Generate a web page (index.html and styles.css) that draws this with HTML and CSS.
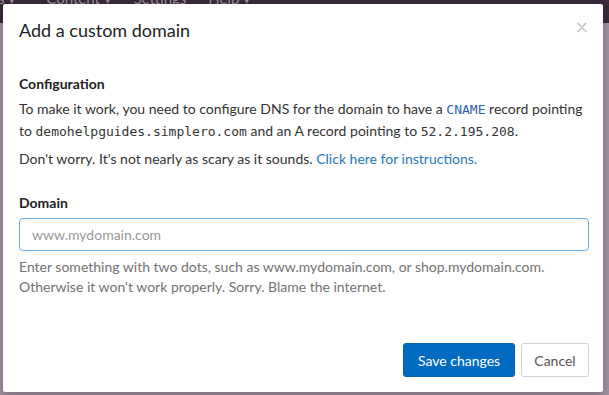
FILE: index.html
```html
<!DOCTYPE html>
<html lang="en">
<head>
    <meta charset="UTF-8">
    <title>Add a custom domain</title>
    <link rel="stylesheet" href="styles.css">
</head>
<body>
    <div class="navbar">
        <span class="nav-item">s &#9662;</span>
        <span class="nav-item">Content &#9662;</span>
        <span class="nav-item">Settings</span>
        <span class="nav-item">Help &#9662;</span>
    </div>
    <div class="backdrop"></div>

    <div class="modal">
        <div class="modal-header">
            <h3 class="modal-title">Add a custom domain</h3>
            <span class="close">&times;</span>
        </div>

        <div class="modal-body">
            <h4 class="section-title">Configuration</h4>
            <p>To make it work, you need to configure DNS for the domain to have a <code class="hl">CNAME</code> record pointing to <code>demohelpguides.simplero.com</code> and an A record pointing to <code>52.2.195.208</code>.</p>
            <p>Don't worry. It's not nearly as scary as it sounds. <a href="#">Click here for instructions.</a></p>

            <label class="field-label" for="domain">Domain</label>
            <input class="field-input" id="domain" type="text" placeholder="www.mydomain.com">
            <p class="help">Enter something with two dots, such as www.mydomain.com, or shop.mydomain.com.<br>Otherwise it won't work properly. Sorry. Blame the internet.</p>
        </div>

        <div class="modal-footer">
            <button class="btn btn-primary">Save changes</button>
            <button class="btn btn-default">Cancel</button>
        </div>
    </div>
</body>
</html>
```

FILE: styles.css
```css
/* base */
body {
    margin: 0;
    height: 395px;
    overflow: hidden;
    font-family: Lato, "Open Sans", sans-serif;
    font-size: 14px;
    color: #333;
    background: #9f8fa0;
    position: relative;
}

/* navbar behind the backdrop */
.navbar {
    height: 23px;
    background: #3a2a3a;
    display: flex;
    gap: 22px;
    overflow: hidden;
}

.nav-item {
    margin-top: -11px;
    font-size: 15px;
    line-height: 18px;
    color: #9a8e9a;
    white-space: nowrap;
}

.nav-item:first-child {
    margin-left: -2px;
}

.nav-item:nth-child(2) {
    margin-left: 8px;
}

/* === modal === */
.modal {
    position: absolute;
    top: 4px;
    left: 3px;
    width: 600px;
    height: 388px;
    background: #fff;
    border-radius: 2px;
    display: flex;
    flex-direction: column;
    box-shadow: 0 2px 8px rgba(0, 0, 0, 0.25);
}

.modal-header {
    display: flex;
    justify-content: space-between;
    align-items: flex-start;
    padding: 13px 14px 0 16px;
}

.modal-title {
    margin: 0;
    font-size: 18px;
    font-weight: 400;
    line-height: 26px;
    color: #222;
}

.close {
    font-size: 17px;
    line-height: 17px;
    margin-top: 2px;
    color: #c9c9c9;
    font-family: "DejaVu Sans", sans-serif;
}

.modal-body {
    padding: 30px 15px 0 16px;
}

.section-title {
    margin: 0 0 4px;
    font-size: 14px;
    line-height: 21px;
    font-weight: 700;
    color: #222;
}

.modal-body p {
    margin: 0 0 6px;
    line-height: 21px;
}

code {
    font-family: "DejaVu Sans Mono", monospace;
    font-size: 13px;
    color: #333;
}

code.hl {
    color: #2f5fb3;
}

a {
    color: #2878c0;
    text-decoration: none;
}

.field-label {
    display: block;
    margin-top: 23px;
    margin-bottom: 5px;
    font-weight: 700;
    line-height: 21px;
    color: #222;
}

.field-input {
    display: block;
    box-sizing: border-box;
    width: 570px;
    height: 33px;
    margin: 0;
    padding: 0 12px;
    font-family: inherit;
    font-size: 14px;
    border: 1px solid #66afe9;
    border-radius: 4px;
    outline: none;
}

.field-input::placeholder {
    color: #999;
}

.modal-body p.help {
    margin: 6px 0 0;
    line-height: 20px;
    color: #737373;
}

/* footer */
.modal-footer {
    margin-top: auto;
    display: flex;
    justify-content: flex-end;
    gap: 6px;
    padding: 0 14px 15px 0;
}

.btn {
    height: 34px;
    padding: 0 12px;
    font-family: inherit;
    font-size: 14px;
    border-radius: 3px;
    cursor: pointer;
}

.btn-primary {
    width: 112px;
    background: #006bc1;
    border: 1px solid #0064b5;
    color: #fff;
}

.btn-default {
    width: 68px;
    background: #fff;
    border: 1px solid #ccd3d9;
    color: #555;
}
```
